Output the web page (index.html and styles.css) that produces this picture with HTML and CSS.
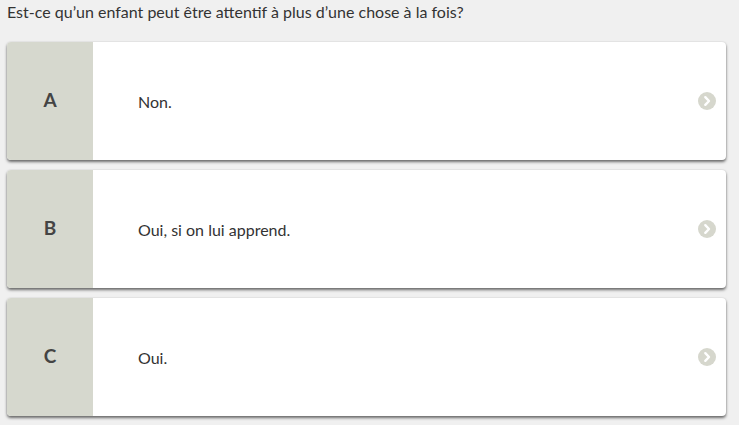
FILE: index.html
```html
<!DOCTYPE html>
<html lang="fr">
<head>
<meta charset="utf-8">
<link rel="stylesheet" href="styles.css">
</head>
<body>
<div class="page">
  <p class="question">Est-ce qu’un enfant peut être attentif à plus d’une chose à la fois?</p>
  <div class="answers">
    <div class="card">
      <div class="letter">A</div>
      <div class="text">Non.</div>
      <svg class="arrow" width="18" height="18" viewBox="0 0 18 18"><circle cx="9" cy="9" r="9" fill="#d6d7cd"/><path d="M7.3 5.2 L11 9 L7.3 12.8" fill="none" stroke="#fff" stroke-width="2.4" stroke-linecap="round" stroke-linejoin="round"/></svg>
    </div>
    <div class="card">
      <div class="letter">B</div>
      <div class="text">Oui, si on lui apprend.</div>
      <svg class="arrow" width="18" height="18" viewBox="0 0 18 18"><circle cx="9" cy="9" r="9" fill="#d6d7cd"/><path d="M7.3 5.2 L11 9 L7.3 12.8" fill="none" stroke="#fff" stroke-width="2.4" stroke-linecap="round" stroke-linejoin="round"/></svg>
    </div>
    <div class="card">
      <div class="letter">C</div>
      <div class="text">Oui.</div>
      <svg class="arrow" width="18" height="18" viewBox="0 0 18 18"><circle cx="9" cy="9" r="9" fill="#d6d7cd"/><path d="M7.3 5.2 L11 9 L7.3 12.8" fill="none" stroke="#fff" stroke-width="2.4" stroke-linecap="round" stroke-linejoin="round"/></svg>
    </div>
  </div>
</div>
</body>
</html>
```
FILE: styles.css
```css
html, body {
  margin: 0;
  padding: 0;
  background: #fff;
}
body {
  font-family: Lato, "Open Sans", sans-serif;
  color: #333;
}
.page {
  background: #f0f0f0;
  height: 425px;
  padding: 0 13px 0 7px;
  box-sizing: border-box;
}
.question {
  margin: 0;
  padding-top: 1px;
  font-size: 16px;
  line-height: 22px;
  color: #333;
}
.answers {
  margin-top: 19px;
  display: flex;
  flex-direction: column;
  gap: 10px;
}
.card {
  display: flex;
  align-items: center;
  height: 118px;
  background: #fff;
  border-radius: 4px;
  overflow: hidden;
  box-shadow: 0 2px 3px rgba(0,0,0,0.55), 0 0 2px rgba(0,0,0,0.12);
}
.letter {
  width: 86px;
  align-self: stretch;
  display: flex;
  align-items: center;
  justify-content: center;
  padding-bottom: 3px;
  box-sizing: border-box;
  background: #d6d8ce;
  font-size: 19px;
  font-weight: 700;
  color: #444;
}
.text {
  flex: 1;
  padding-left: 45px;
  font-size: 16px;
  color: #333;
}
.arrow {
  margin-right: 10px;
  flex: none;
}
```
